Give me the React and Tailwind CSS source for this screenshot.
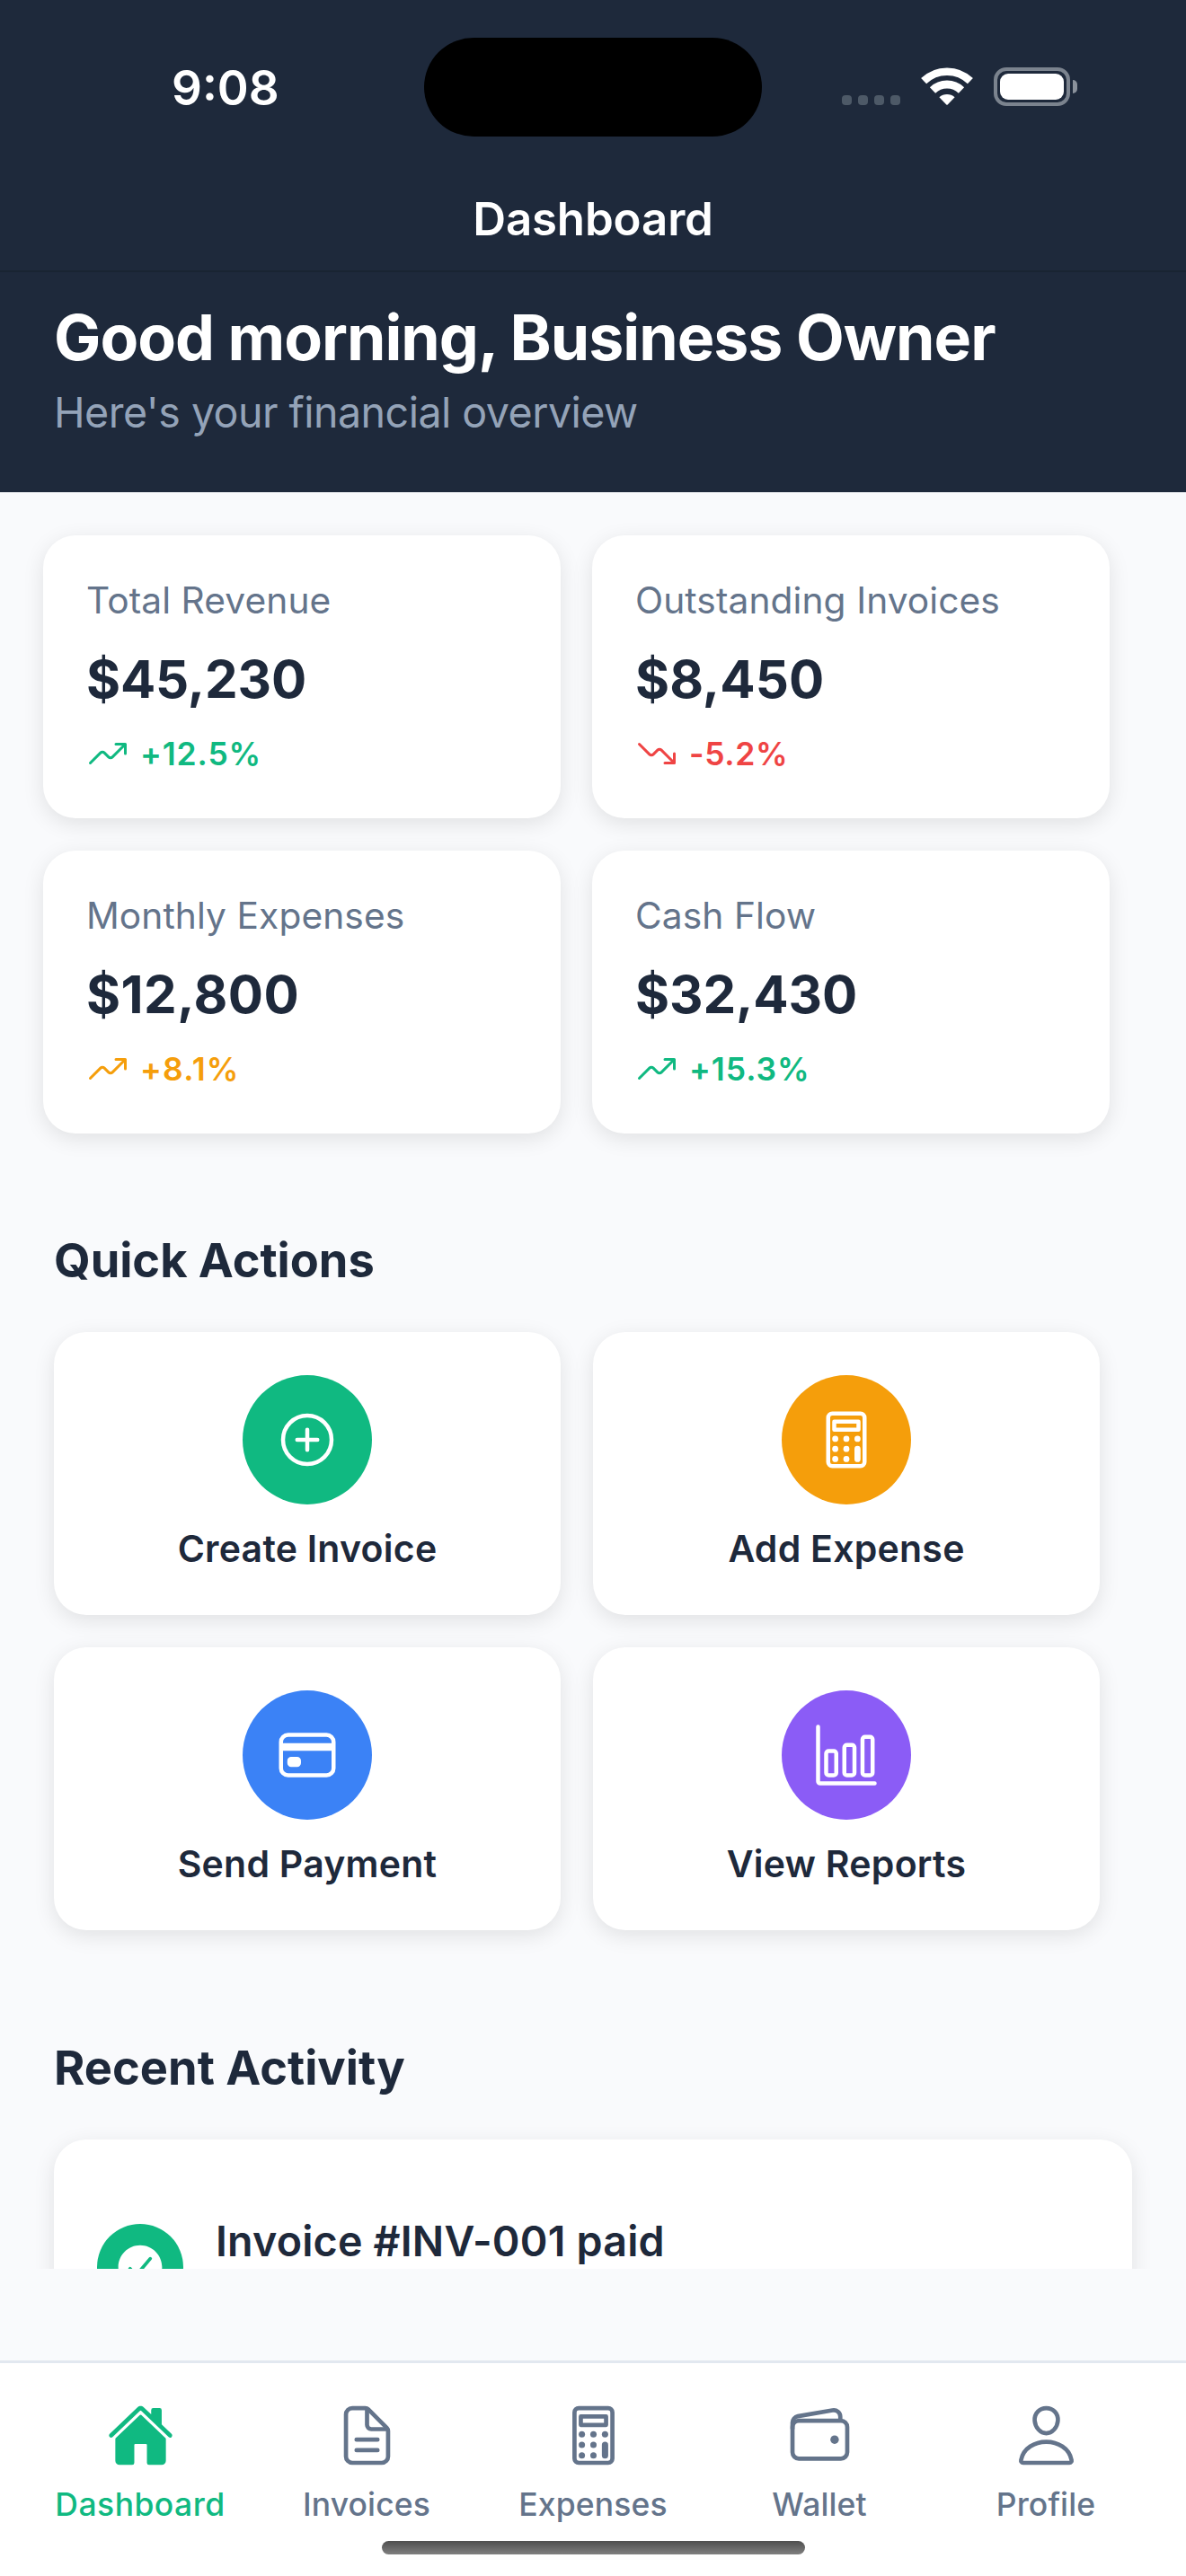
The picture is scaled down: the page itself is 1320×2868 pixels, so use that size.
import React from "react";
import {
  IoAddCircleOutline,
  IoBarChartOutline,
  IoCalculatorOutline,
  IoCardOutline,
  IoCheckmarkCircle,
  IoDocumentTextOutline,
  IoHome,
  IoPersonOutline,
  IoTrendingDownOutline,
  IoTrendingUpOutline,
  IoWalletOutline,
} from "react-icons/io5";

const cardBase = "h-[315px] rounded-[36px] bg-white shadow-[0_6px_23px_rgba(0,0,0,0.1)]";

const stats = [
  { label: "Total Revenue", value: "$45,230", change: "+12.5%", tone: "text-[#10b981]", Icon: IoTrendingUpOutline, spacing: "tracking-[0.024em]", valueSpacing: "tracking-[-0.003em]" },
  { label: "Outstanding Invoices", value: "$8,450", change: "-5.2%", tone: "text-[#ef4444]", Icon: IoTrendingDownOutline, spacing: "tracking-[0.018em]", valueSpacing: "tracking-[0.001em]" },
  { label: "Monthly Expenses", value: "$12,800", change: "+8.1%", tone: "text-[#f59e0b]", Icon: IoTrendingUpOutline, spacing: "tracking-[0.034em]", valueSpacing: "tracking-[0.008em]" },
  { label: "Cash Flow", value: "$32,430", change: "+15.3%", tone: "text-[#10b981]", Icon: IoTrendingUpOutline, spacing: "tracking-[0.026em]", valueSpacing: "tracking-[-0.002em]" },
];

const actions = [
  { label: "Create Invoice", color: "bg-[#10b981]", Icon: IoAddCircleOutline },
  { label: "Add Expense", color: "bg-[#f59e0b]", Icon: IoCalculatorOutline },
  { label: "Send Payment", color: "bg-[#3b82f6]", Icon: IoCardOutline },
  { label: "View Reports", color: "bg-[#8b5cf6]", Icon: IoBarChartOutline },
];

const tabs = [
  { label: "Dashboard", Icon: IoHome, active: true },
  { label: "Invoices", Icon: IoDocumentTextOutline },
  { label: "Expenses", Icon: IoCalculatorOutline },
  { label: "Wallet", Icon: IoWalletOutline },
  { label: "Profile", Icon: IoPersonOutline },
];

function WifiIcon() {
  return (
    <svg className="ml-[23px] h-[42px] w-[58px]" viewBox="0 0 58 42" fill="none">
      <path d="M3.1 15.2A37.2 37.2 0 0 1 54.9 15.2" stroke="white" strokeWidth="8.6" />
      <path d="M13 25.4A23.1 23.1 0 0 1 45 25.4" stroke="white" strokeWidth="9" />
      <path d="M20.4 33.3A13 13 0 0 1 37.6 33.3L29.7 41.5Q29 42.1 28.3 41.5Z" fill="white" />
    </svg>
  );
}

function StatusBar() {
  return (
    <div className="flex h-[194px] items-start pt-[42px]">
      <div className="flex w-[472px] pl-[191px]">
        <span className="mt-[26px] text-[53px] leading-[60px] font-semibold text-white">9:08</span>
      </div>
      <div className="h-[110px] w-[376px] rounded-full bg-black" />
      <div className="flex h-[110px] items-start pt-[33px] pl-[89px]">
        <div className="mt-[31px] flex gap-[7px]">
          {[0, 1, 2, 3].map((dot) => (
            <div key={dot} className="size-[11px] rounded-[4px] bg-[#4d5967]" />
          ))}
        </div>
        <WifiIcon />
        <div className="ml-[23px] flex h-[43px] w-[85px] rounded-[14px] border-4 border-[#7b838e] p-[3px]">
          <div className="flex-1 rounded-[9px] bg-white" />
        </div>
        <div className="mt-[14px] ml-[3px] h-[15px] w-[5px] rounded-r-full bg-[#8b929c]" />
      </div>
    </div>
  );
}

function StatCard({ label, value, change, tone, Icon, spacing, valueSpacing }) {
  return (
    <div className={`${cardBase} w-[576px] p-12`}>
      <p className="mb-[26px] text-[40.7px] leading-[50px] tracking-[0.002em] text-[#64748b]">{label}</p>
      <p className={`mb-[23px] text-[58.2px] leading-[72px] font-bold ${valueSpacing}`}>{value}</p>
      <div className={`flex items-center gap-3 ${tone}`}>
        <Icon className="size-12" />
        <span className={`mt-px -mb-px text-[35.5px] leading-[48px] font-semibold ${spacing}`}>{change}</span>
      </div>
    </div>
  );
}

function ActionCard({ label, color, Icon }) {
  return (
    <div className={`${cardBase} flex w-[564px] flex-col items-center pt-12`}>
      <div className={`flex size-36 items-center justify-center rounded-full text-white ${color}`}>
        <Icon className="size-[72px]" />
      </div>
      <span className="mt-6 text-[41px] leading-[50px] font-semibold tracking-[0.006em]">{label}</span>
    </div>
  );
}

export default function App() {
  return (
    <div className="flex h-[2868px] w-[1320px] flex-col overflow-hidden bg-[#f9fafc] font-['Inter',sans-serif] text-[#1e293b]">
      <header className="h-[548px] shrink-0 bg-[#1e293b]">
        <StatusBar />
        <div className="h-[109px] border-b-2 border-[#192432] pt-5 text-center text-[51px] leading-[60px] font-semibold tracking-[-0.003em] text-white">
          Dashboard
        </div>
        <div className="px-[60px] pt-[30px]">
          <h1 className="text-[69.8px] leading-[86px] font-bold tracking-[-0.0143em] whitespace-nowrap text-white">
            Good morning, Business Owner
          </h1>
          <p className="mt-[11px] text-[46.6px] leading-[58px] tracking-[-0.0117em] text-[#94a3b8]">
            Here's your financial overview
          </p>
        </div>
      </header>

      <main className="h-[1978px] shrink-0 overflow-hidden pt-12">
        <div className="flex flex-wrap gap-x-[35px] gap-y-9 pl-12">
          {stats.map((stat) => (
            <StatCard key={stat.label} {...stat} />
          ))}
        </div>

        <section className="mt-[108px] px-[60px]">
          <h2 className="mb-[47px] text-[52.4px] leading-[66px] font-bold tracking-[-0.001em]">Quick Actions</h2>
          <div className="flex flex-wrap gap-9">
            {actions.map((action) => (
              <ActionCard key={action.label} {...action} />
            ))}
          </div>
        </section>

        <section className="mt-[120px] px-[60px]">
          <h2 className="mb-[47px] text-[52.4px] leading-[66px] font-bold">Recent Activity</h2>
          <div className="flex h-[400px] items-start gap-9 rounded-[36px] bg-white px-12 pt-[84px] shadow-[0_6px_23px_rgba(0,0,0,0.1)]">
            <div className="mt-[10px] flex size-24 items-center justify-center rounded-full bg-[#10b981] text-white">
              <IoCheckmarkCircle className="size-[60px]" />
            </div>
            <span className="text-[46.6px] leading-[58px] font-semibold tracking-[0.004em]">Invoice #INV-001 paid</span>
          </div>
        </section>
      </main>

      <nav className="mt-auto flex h-[240px] shrink-0 flex-col items-center border-t-3 border-[#e2e8f0] bg-white">
        <div className="flex w-full px-[30px] pt-[43px]">
          {tabs.map(({ label, Icon, active }) => (
            <div
              key={label}
              className={`flex w-[252px] flex-col items-center ${active ? "text-[#10b981]" : "text-[#64748b]"}`}
            >
              <Icon className="size-[75px]" />
              <span className={`mt-4 -mb-px text-[35.5px] leading-[48px] font-medium ${active ? "tracking-[0.013em]" : "tracking-[0.003em]"}`}>
                {label}
              </span>
            </div>
          ))}
        </div>
        <div className="mt-[17px] h-[15px] w-[471px] rounded-full bg-linear-to-b from-[#4f4f4f] to-[#808080]" />
      </nav>
    </div>
  );
}
